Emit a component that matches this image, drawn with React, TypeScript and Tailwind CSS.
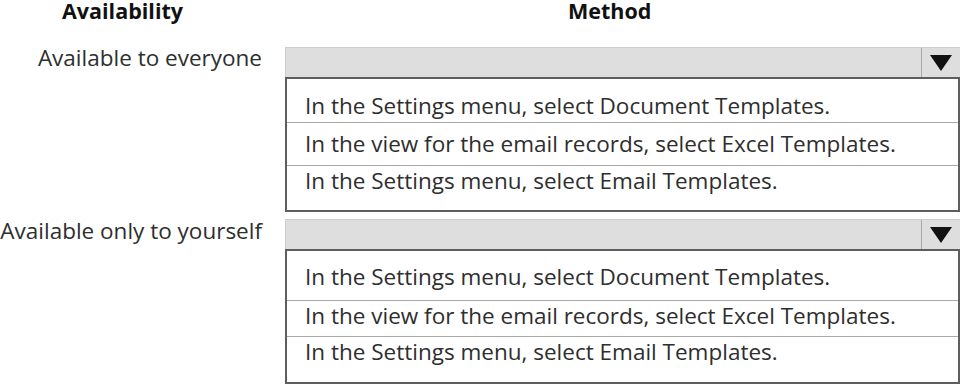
const rowsA = [
  { text: "In the Settings menu, select Document Templates.", cls: "h-[44px] pt-[11px] border-b border-[#a8a8a8]" },
  { text: "In the view for the email records, select Excel Templates.", cls: "h-[43px] border-b border-[#a8a8a8]" },
  { text: "In the Settings menu, select Email Templates.", cls: "h-[44px] pb-[15px]" },
]

const rowsB = [
  { text: "In the Settings menu, select Document Templates.", cls: "h-[50px] pt-[3px] border-b border-[#a8a8a8]" },
  { text: "In the view for the email records, select Excel Templates.", cls: "h-[36px] pb-[6px] border-b border-[#a8a8a8]" },
  { text: "In the Settings menu, select Email Templates.", cls: "h-[45px] pb-[16px]" },
]

function Dropdown({ rows }: { rows: { text: string; cls: string }[] }) {
  return (
    <div className="w-[675px]">
      {/* closed select bar */}
      <div className="flex h-[30px] bg-[#dedede] border-t border-l border-[#cdcdcd]">
        <div className="flex-1" />
        <div className="w-[39px] flex items-center justify-center border-l border-[#a9a9a9]">
          <svg width="22" height="16" viewBox="0 0 22 16">
            <path d="M0 0 L22 0 L11 16 Z" fill="#111" />
          </svg>
        </div>
      </div>
      {/* options list */}
      <div className="border-2 border-[#5e5e5e] bg-white">
        {rows.map((r) => (
          <div key={r.text} className={`flex items-center pl-[18px] whitespace-nowrap ${r.cls}`}>
            {r.text}
          </div>
        ))}
      </div>
    </div>
  )
}

export default function App() {
  return (
    <div
      className="w-[962px] h-[386px] bg-white text-[#2e2e2e] overflow-hidden"
      style={{ fontFamily: "'Open Sans', 'Noto Sans', sans-serif" }}
    >
      {/* Headings */}
      <div className="flex h-[22px] text-[21.5px] leading-[21px] font-bold text-[#111]">
        <div className="w-[285px] pl-[62px]">Availability</div>
        <div className="pl-[283px]">Method</div>
      </div>

      <div className="mt-[25px] flex flex-col gap-[7px] text-[22.5px]">
        <div className="flex">
          <div className="w-[285px] pr-[23px] text-right leading-[24px] -mt-px whitespace-nowrap">Available to everyone</div>
          <Dropdown rows={rowsA} />
        </div>
        <div className="flex">
          <div className="w-[285px] pr-[23px] text-right leading-[24px] whitespace-nowrap">Available only to yourself</div>
          <Dropdown rows={rowsB} />
        </div>
      </div>
    </div>
  )
}
